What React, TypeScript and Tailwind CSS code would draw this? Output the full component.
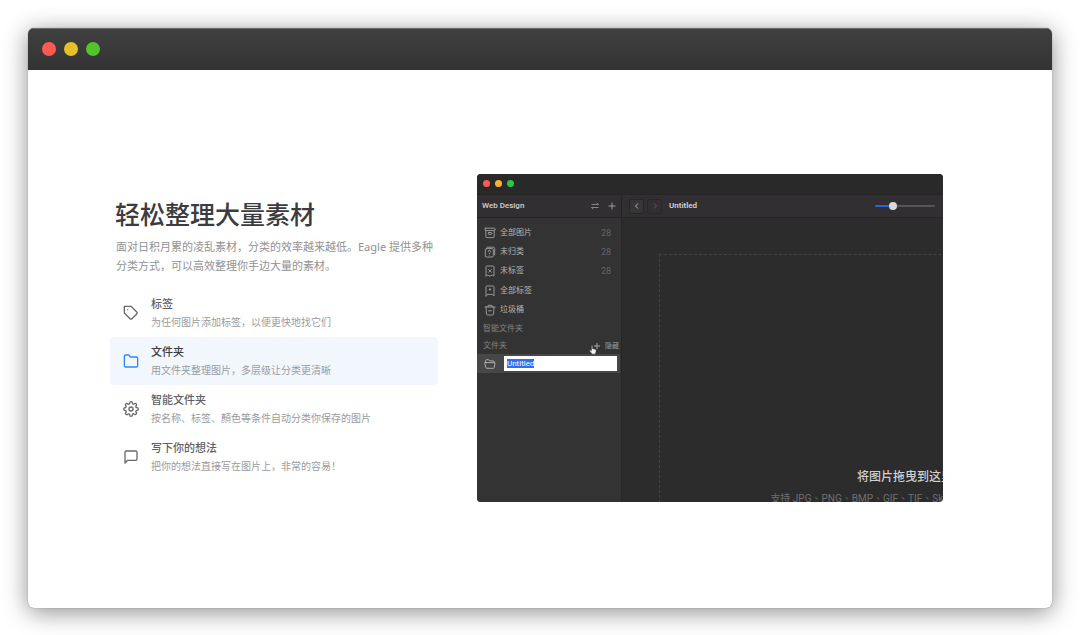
import { useEffect, useRef } from "react";
import type { ReactNode } from "react";
import { FiFolder, FiMessageSquare, FiSettings, FiTag } from "react-icons/fi";

type Feature = { icon: ReactNode; title: string; text: string; active?: boolean };

const features: Feature[] = [
  { icon: <FiTag size={16} />, title: "标签", text: "为任何图片添加标签，以便更快地找它们" },
  { icon: <FiFolder size={16} />, title: "文件夹", text: "用文件夹整理图片，多层级让分类更清晰", active: true },
  { icon: <FiSettings size={16} />, title: "智能文件夹", text: "按名称、标签、顏色等条件自动分类你保存的图片" },
  { icon: <FiMessageSquare size={16} />, title: "写下你的想法", text: "把你的想法直接写在图片上，非常的容易！" },
];

function Glyph({ children }: { children: ReactNode }) {
  return (
    <svg
      viewBox="0 0 12 12"
      className="size-3 shrink-0"
      fill="none"
      stroke="currentColor"
      strokeWidth="0.9"
      strokeLinecap="round"
      strokeLinejoin="round"
      aria-hidden="true"
    >
      {children}
    </svg>
  );
}

const library: { icon: ReactNode; name: string; count?: number }[] = [
  {
    name: "全部图片",
    count: 28,
    icon: (
      <Glyph>
        <rect x="1" y="1.2" width="10" height="2.4" rx="0.5" />
        <path d="M1.8 3.6v6.2a.8.8 0 0 0 .8.8h6.8a.8.8 0 0 0 .8-.8V3.6" />
        <rect x="4.2" y="5.5" width="3.6" height="1.8" rx="0.6" />
      </Glyph>
    ),
  },
  {
    name: "未归类",
    count: 28,
    icon: (
      <Glyph>
        <path d="M3 1.2h6.3a1.4 1.4 0 0 1 1.4 1.4V9" />
        <rect x="1.3" y="2.6" width="8" height="8.4" rx="1.2" />
        <path d="M4.2 5.5a1.2 1.2 0 1 1 1.7 1.1c-.4.2-.6.4-.6.9M5.3 9v.1" />
      </Glyph>
    ),
  },
  {
    name: "未标签",
    count: 28,
    icon: (
      <Glyph>
        <path d="M2 11V1.7a.7.7 0 0 1 .7-.7h6.6a.7.7 0 0 1 .7.7V11L8.5 10.2 6 11 3.5 10.2zM4.7 4.6l2.6 2.6M7.3 4.6L4.7 7.2" />
      </Glyph>
    ),
  },
  {
    name: "全部标签",
    icon: (
      <Glyph>
        <path d="M2 11V1.7a.7.7 0 0 1 .7-.7h6.6a.7.7 0 0 1 .7.7V11L8.2 9.4H3.8z" />
        <path d="M6 3.6v1.6M5.2 4.4h1.6" />
      </Glyph>
    ),
  },
  {
    name: "垃圾桶",
    icon: (
      <Glyph>
        <path d="M1 3h10M4 3V1.3h4V3M2 3l.5 7.2a.9.9 0 0 0 .9.8h5.2a.9.9 0 0 0 .9-.8L10 3M4.6 6.8h2.8" />
      </Glyph>
    ),
  },
];

function Lights({ small = false }: { small?: boolean }) {
  const dot = small ? "size-[7px] rounded-full" : "size-[14px] rounded-full";
  return (
    <div className={small ? "flex gap-[5px]" : "flex gap-2"}>
      <span className={dot + " bg-[#ff5a52]"} />
      <span className={dot + (small ? " bg-[#fdb32b]" : " bg-[#e6c029]")} />
      <span className={dot + (small ? " bg-[#28c83f]" : " bg-[#53c22b]")} />
    </div>
  );
}

function Sidebar() {
  const field = useRef<HTMLInputElement>(null);
  useEffect(() => {
    field.current?.focus();
    field.current?.select();
  }, []);

  return (
    <aside className="w-[145px] shrink-0 border-r border-[#262626] bg-[#333333] text-[8px] leading-3 text-[#b4b4b4]">
      <ul className="mt-[5px] grid h-[97px] grid-rows-5">
        {library.map((row) => (
          <li key={row.name} className="flex">
            <button type="button" className="flex flex-1 items-center gap-1 pr-2.5 pl-[7px] text-left">
              <span className="text-[#a2a2a2]">{row.icon}</span>
              <span className="flex-1">{row.name}</span>
              {row.count && <span className="text-[9px] text-[#646464]">{row.count}</span>}
            </button>
          </li>
        ))}
      </ul>
      <h3 className="flex h-[18px] items-center pl-1.5 text-[#828282]">智能文件夹</h3>
      <div className="flex h-[16px] items-center pr-[2px] pl-1.5 text-[#828282]">
        <h3 className="flex-1">文件夹</h3>
        <button type="button" aria-label="新建文件夹" className="relative mr-1 text-[#a8a8a8]">
          <svg viewBox="0 0 8 8" className="size-2" stroke="currentColor" strokeWidth="1" aria-hidden="true">
            <path d="M4 1v6M1 4h6" />
          </svg>
          <svg viewBox="0 0 10 12" className="absolute top-[3px] -left-1 h-2.5 w-2" aria-hidden="true">
            <path
              d="M3 1.4c0-1.2 1.6-1.2 1.6 0v3l3.3.6c.8.2 1.2.7 1.1 1.5l-.5 3-1 1.7H4L1 7.6c-.7-.9.3-1.8 1.2-1.2l.8.6z"
              fill="#f2f2f2"
              stroke="#333333"
              strokeWidth="0.7"
            />
          </svg>
        </button>
        <button type="button" className="text-[7px] text-[#9a9a9a]">隐藏</button>
      </div>
      <div className="mr-px flex h-[19px] items-center gap-2 bg-[#474747] pr-[3px] pl-[7px]">
        <span className="text-[#b5b5b5]">
          <Glyph>
            <path d="M1.6 4.5V2.5a.8.8 0 0 1 .8-.8h2.2l1 1.2h3.8a.8.8 0 0 1 .8.8v.8M1 4.6h10l-.8 5a.8.8 0 0 1-.8.7H2.600a.8.8 0 0 1-.8-.7z" />
          </Glyph>
        </span>
        <input
          ref={field}
          aria-label="文件夹名称"
          defaultValue="Untitled"
          className="h-[15px] min-w-0 flex-1 bg-white pl-[3px] text-[8px] text-[#333333] outline-none selection:bg-[#2f6df6] selection:text-white"
        />
      </div>
    </aside>
  );
}

function Preview() {
  return (
    <section
      aria-label="Web Design"
      className="flex h-[328px] min-w-0 flex-1 flex-col overflow-hidden rounded bg-[#2c2c2c] font-['Roboto','Noto_Sans_CJK_TC',sans-serif]"
    >
      <header className="flex h-[20px] shrink-0 items-center bg-[#2a292a] pb-px pl-1.5">
        <Lights small />
      </header>
      <div className="flex h-[24px] shrink-0 border-y border-[#252525] bg-[#322f32] text-[8px] text-[#d2d2d2]">
        <div className="flex w-[145px] shrink-0 items-center border-r border-[#252525] pr-[5px] pl-[5px]">
          <h2 className="flex-1 font-medium">Web Design</h2>
          <button type="button" aria-label="切换资源库" className="mr-[9px] text-[#9a9a9a]">
            <svg viewBox="0 0 8 8" className="size-2" fill="none" stroke="currentColor" strokeWidth="0.8" aria-hidden="true">
              <path d="M0.5 2.5h7L5.7 0.8M7.500 5.500h-7l1.800 1.700" />
            </svg>
          </button>
          <button type="button" aria-label="添加" className="text-[#a6a6a6]">
            <svg viewBox="0 0 8 8" className="size-2" stroke="currentColor" strokeWidth="0.9" aria-hidden="true">
              <path d="M4 0.5v7M0.5 4h7" />
            </svg>
          </button>
        </div>
        <div className="flex min-w-0 flex-1 items-center pr-2 pl-[7px]">
          <button type="button" aria-label="后退" className="flex size-[15px] items-center justify-center rounded-xs border border-[#262626] bg-[#373637] text-[#b0b0b0]">
            <svg viewBox="0 0 8 8" className="size-2" fill="none" stroke="currentColor" aria-hidden="true">
              <path d="M5 1.5L2.5 4 5 6.5" />
            </svg>
          </button>
          <button type="button" aria-label="前进" className="ml-[3px] flex size-[15px] items-center justify-center rounded-xs border border-[#282828] bg-[#312f31] text-[#5c5c5c]">
            <svg viewBox="0 0 8 8" className="size-2" fill="none" stroke="currentColor" aria-hidden="true">
              <path d="M3 1.5L5.5 4 3 6.5" />
            </svg>
          </button>
          <span className="ml-[7px] flex-1 font-semibold">Untitled</span>
          <input
            type="range"
            aria-label="缩放"
            defaultValue={27}
            className="h-2 w-[60px] appearance-none bg-transparent [&::-webkit-slider-runnable-track]:h-[2px] [&::-webkit-slider-runnable-track]:rounded-full [&::-webkit-slider-runnable-track]:bg-linear-to-r [&::-webkit-slider-runnable-track]:from-[#2864dc] [&::-webkit-slider-runnable-track]:from-30% [&::-webkit-slider-runnable-track]:to-[#575457] [&::-webkit-slider-runnable-track]:to-30% [&::-webkit-slider-thumb]:-mt-[3px] [&::-webkit-slider-thumb]:size-2 [&::-webkit-slider-thumb]:appearance-none [&::-webkit-slider-thumb]:rounded-full [&::-webkit-slider-thumb]:bg-[#d6d9dd]"
          />
        </div>
      </div>
      <div className="flex min-h-0 flex-1">
        <Sidebar />
        <main className="min-w-0 flex-1 overflow-hidden pt-9 pl-[37px]">
          <div className="flex h-[440px] w-[492px] flex-col items-center border border-dashed border-[#434343] pt-[212px] text-center whitespace-nowrap">
            <p className="text-[12px] leading-5 font-medium text-[#cfcfcf]">将图片拖曳到这里</p>
            <p className="mt-0.5 text-[10px] leading-5 text-[#6e6e6e]">支持 JPG、PNG、BMP、GIF、TIF、Sketch、PSD、AI、SVG</p>
          </div>
        </main>
      </div>
    </section>
  );
}

export default function App() {
  return (
    <div lang="zh-CN" className="min-h-screen bg-white px-7 pt-7 pb-[27px] font-['Noto_Sans','Noto_Sans_CJK_SC',sans-serif]">
      <div className="overflow-hidden rounded-md bg-white shadow-[0_0_1px_#00000099,0_4px_24px_#00000073]">
        <header className="flex h-[42px] items-center bg-linear-to-b from-[#404040] to-[#333333] pl-[14px] shadow-[inset_0_1px_0_#6b6b6b]">
          <Lights />
        </header>
        <div className="flex items-start gap-[39px] pt-[104px] pr-[109px] pb-[106px] pl-[82px]">
          <div className="w-[328px] shrink-0 pt-[22px]">
            <h1 className="pl-[5px] text-[25px] leading-9 font-medium text-[#3c3c40]">轻松整理大量素材</h1>
            <p className="mt-[5px] pl-1.5 text-[11px] leading-[19px] text-[#919194]">
              面对日积月累的凌乱素材，分类的效率越来越低。Eagle 提供多种分类方式，可以高效整理你手边大量的素材。
            </p>
            <ul className="mt-3.5">
              {features.map((f) => (
                <li key={f.title}>
                  <button
                    type="button"
                    className={
                      "flex h-12 w-full items-center gap-3 rounded pl-[13px] text-left " +
                      (f.active ? "bg-[#f2f7fe] text-[#2f86fb]" : "text-[#69696d]")
                    }
                  >
                    {f.icon}
                    <span className="flex flex-col">
                      <span className={"text-[11px] leading-[18px] font-medium " + (f.active ? "text-[#3c3c40]" : "text-[#606065]")}>
                        {f.title}
                      </span>
                      <span className="text-[10px] leading-[18px] text-[#9b9b9e]">{f.text}</span>
                    </span>
                  </button>
                </li>
              ))}
            </ul>
          </div>
          <Preview />
        </div>
      </div>
    </div>
  );
}
